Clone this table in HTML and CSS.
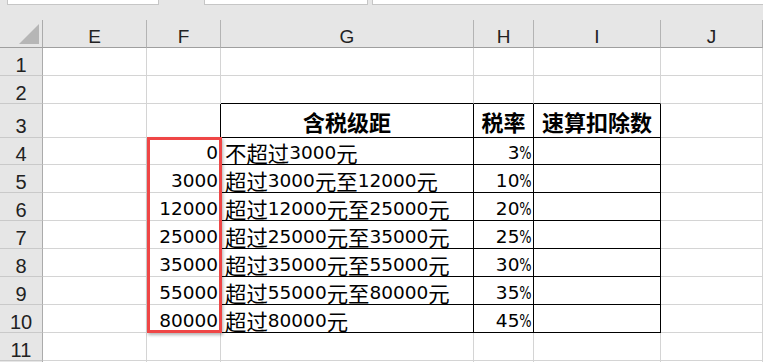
FILE: index.html
```html
<!DOCTYPE html>
<html lang="zh-CN">
<head>
<meta charset="utf-8">
<title>税率表</title>
<link rel="stylesheet" href="styles.css">
</head>
<body>
<div class="app">
  <div class="topbar">
    <div class="field f1"></div>
    <div class="field f2"></div>
    <div class="field f3"></div>
  </div>
  <div class="sheet">
    <div class="grid">
      <div class="corner"><svg width="20" height="20" viewBox="0 0 20 20"><polygon points="20,0 20,20 0,20" fill="#b6b6b6"/></svg></div>
      <div class="colh">E</div><div class="colh">F</div><div class="colh">G</div><div class="colh">H</div><div class="colh">I</div><div class="colh">J</div>

      <div class="rowh">1</div><div></div><div></div><div></div><div></div><div></div><div></div>
      <div class="rowh">2</div><div></div><div></div><div class="tb"></div><div class="tb"></div><div class="tb"></div><div></div>

      <div class="rowh r3">3</div><div></div><div class="tr"></div>
      <div class="hd tb tr">含税级距</div><div class="hd tb tr">税率</div><div class="hd tb tr">速算扣除数</div><div></div>

      <div class="rowh">4</div><div></div><div class="num tr">0</div>
      <div class="txt tb tr"><span class="zh">不超过</span>3000<span class="zh">元</span></div>
      <div class="num pc tb tr">3<span class="pct">%</span></div><div class="tb tr"></div><div></div>

      <div class="rowh">5</div><div></div><div class="num tr">3000</div>
      <div class="txt tb tr"><span class="zh">超过</span>3000<span class="zh">元至</span>12000<span class="zh">元</span></div>
      <div class="num pc tb tr">10<span class="pct">%</span></div><div class="tb tr"></div><div></div>

      <div class="rowh">6</div><div></div><div class="num tr">12000</div>
      <div class="txt tb tr"><span class="zh">超过</span>12000<span class="zh">元至</span>25000<span class="zh">元</span></div>
      <div class="num pc tb tr">20<span class="pct">%</span></div><div class="tb tr"></div><div></div>

      <div class="rowh">7</div><div></div><div class="num tr">25000</div>
      <div class="txt tb tr"><span class="zh">超过</span>25000<span class="zh">元至</span>35000<span class="zh">元</span></div>
      <div class="num pc tb tr">25<span class="pct">%</span></div><div class="tb tr"></div><div></div>

      <div class="rowh">8</div><div></div><div class="num tr">35000</div>
      <div class="txt tb tr"><span class="zh">超过</span>35000<span class="zh">元至</span>55000<span class="zh">元</span></div>
      <div class="num pc tb tr">30<span class="pct">%</span></div><div class="tb tr"></div><div></div>

      <div class="rowh">9</div><div></div><div class="num tr">55000</div>
      <div class="txt tb tr"><span class="zh">超过</span>55000<span class="zh">元至</span>80000<span class="zh">元</span></div>
      <div class="num pc tb tr">35<span class="pct">%</span></div><div class="tb tr"></div><div></div>

      <div class="rowh">10</div><div></div><div class="num tr">80000</div>
      <div class="txt tb tr"><span class="zh">超过</span>80000<span class="zh">元</span></div>
      <div class="num pc tb tr">45<span class="pct">%</span></div><div class="tb tr"></div><div></div>

      <div class="rowh">11</div><div></div><div></div><div></div><div></div><div></div><div></div>
      <div class="rowh"></div><div></div><div></div><div></div><div></div><div></div><div></div>
    </div>
    <div class="sel"></div>
  </div>
</div>
</body>
</html>
```

FILE: styles.css
```css
html, body {
  margin: 0;
  padding: 0;
  background: #ffffff;
}

.app {
  width: 763px;
  height: 362px;
  overflow: hidden;
  background: #e6e6e6;
  font-family: "Liberation Sans", Arial, sans-serif;
  color: #000;
}

.topbar {
  display: flex;
  height: 5px;
}

.field {
  box-sizing: border-box;
  height: 5px;
  background: #ffffff;
  border: 1px solid #c6c6c6;
  border-top: 0;
}

.f1 { margin-left: 7px; width: 152px; }
.f2 { margin-left: 45px; width: 164px; }
.f3 { margin-left: 4px; flex: 1; margin-right: -4px; }

.sheet {
  position: relative;
  margin-top: 15px;
}

.grid {
  display: grid;
  grid-template-columns: 43px 104px 74px 253px 60px 127px 1fr;
  grid-template-rows: 28px 28px 28px 34px 27px repeat(8, 28px);
  background: #ffffff;
}

.grid > div {
  box-sizing: border-box;
  border-right: 1px solid #d4d4d4;
  border-bottom: 1px solid #d4d4d4;
  display: flex;
  align-items: flex-end;
  min-width: 0;
  white-space: nowrap;
}

.grid > .corner {
  background: #e6e6e6;
  border-right-color: #ababab;
  border-bottom-color: #9f9f9f;
  justify-content: flex-end;
  padding: 0 3px 3px 0;
}

.corner svg { display: block; }

.grid > .colh {
  background: #e6e6e6;
  border-right-color: #b3b3b3;
  border-bottom-color: #9f9f9f;
  justify-content: center;
  font-size: 19px;
  line-height: 20px;
  color: #222;
}

.grid > .rowh {
  background: #e6e6e6;
  border-right-color: #ababab;
  border-bottom-color: #c9c9c9;
  justify-content: center;
  font-size: 20px;
  line-height: 20px;
  color: #222;
  padding-bottom: 0;
}

.grid > .r3 { padding-bottom: 1px; }

.grid > .tb { border-bottom-color: #000; }
.grid > .tr { border-right-color: #000; }

.num,
.txt {
  font-family: "DejaVu Sans", "Noto Sans CJK SC", sans-serif;
  font-size: 18.5px;
  line-height: 20px;
  padding-bottom: 1px;
}

.grid > .num {
  justify-content: flex-end;
  padding-right: 2px;
}

.grid > .pc { padding-right: 1px; }

.grid > .txt {
  justify-content: flex-start;
  padding-left: 4px;
}

.zh {
  font-family: "Noto Sans CJK SC", sans-serif;
  font-size: 21.4px;
  line-height: 20px;
}

.pct {
  display: inline-block;
  transform: scaleX(0.7);
  transform-origin: right center;
  margin-left: -5px;
}

.grid > .hd {
  justify-content: center;
  align-items: center;
  font-family: "Noto Sans CJK SC", sans-serif;
  font-weight: 700;
  font-size: 22px;
  line-height: 24px;
}

.sel {
  position: absolute;
  left: 147px;
  top: 117px;
  width: 75px;
  height: 196px;
  box-sizing: border-box;
  border: 3px solid #ef4646;
  box-shadow: 1px 2px 3px rgba(0, 0, 0, 0.3);
}
```
